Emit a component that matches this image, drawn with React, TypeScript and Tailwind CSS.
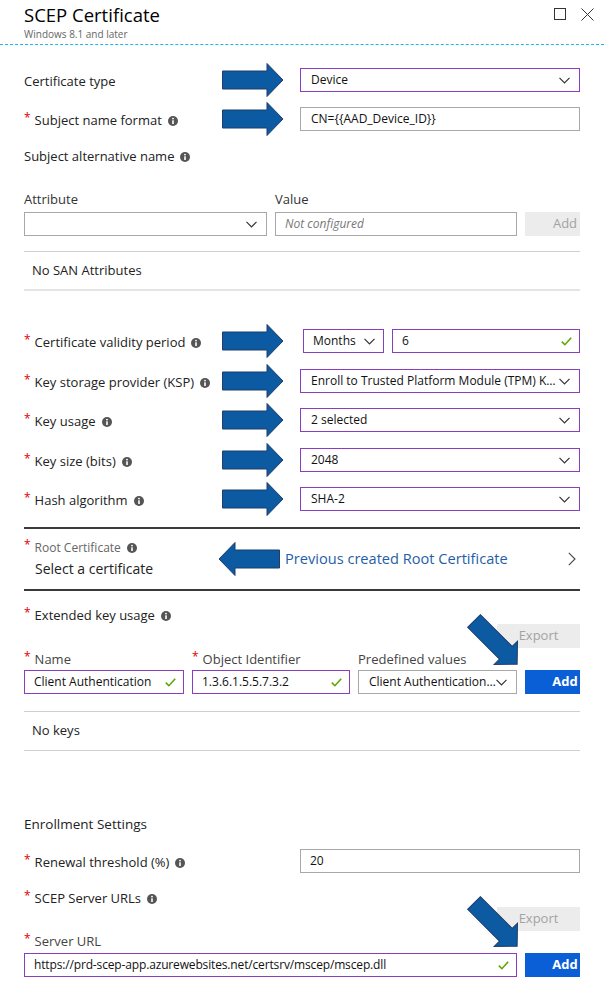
import React from "react";

function Info() {
  return (
    <svg width="10" height="10" viewBox="0 0 10 10" className="inline-block ml-[6px] align-[-1px]">
      <circle cx="5" cy="5" r="5" fill="#555" />
      <rect x="4.2" y="4.3" width="1.6" height="3.7" fill="#fff" />
      <circle cx="5" cy="2.6" r="0.95" fill="#fff" />
    </svg>
  );
}

function Chevron() {
  return (
    <svg width="11" height="7" viewBox="0 0 11 7" className="shrink-0">
      <polyline points="0.5,0.8 5.5,5.8 10.5,0.8" fill="none" stroke="#333" strokeWidth="1.2" />
    </svg>
  );
}

function Check() {
  return (
    <svg width="11" height="9" viewBox="0 0 11 9" className="shrink-0">
      <polyline points="0.8,4.6 3.9,7.7 10.2,0.8" fill="none" stroke="#5ea500" strokeWidth="1.6" />
    </svg>
  );
}

function Req() {
  return <span className="text-[#e00000] text-[12px] relative top-[-3px] mr-[4px]">*</span>;
}

function Label({ req, info, children }: { req?: boolean; info?: boolean; children: React.ReactNode }) {
  return (
    <span className="text-[13px] text-[#222] whitespace-nowrap">
      {req && <Req />}
      {children}
      {info && <Info />}
    </span>
  );
}

function Select({ text, purple = true, className = "" }: { text: string; purple?: boolean; className?: string }) {
  return (
    <div
      className={`h-[24px] border flex items-center justify-between pl-[10px] pr-[9px] bg-white ${
        purple ? "border-[#8a3cc2]" : "border-[#a8a8a8]"
      } ${className}`}
    >
      <span className="text-[12px] text-[#111] truncate">{text}</span>
      <Chevron />
    </div>
  );
}

function Input({
  text,
  purple = false,
  check = false,
  italic = false,
  className = "",
  textClass = "",
}: {
  text: string;
  purple?: boolean;
  check?: boolean;
  italic?: boolean;
  className?: string;
  textClass?: string;
}) {
  return (
    <div
      className={`h-[24px] border flex items-center justify-between pl-[9px] pr-[7px] bg-white ${
        purple ? "border-[#8a3cc2]" : "border-[#a8a8a8]"
      } ${className}`}
    >
      <span className={`text-[12px] truncate ${italic ? "italic text-[#777]" : "text-[#111]"} ${textClass}`}>{text}</span>
      {check && <Check />}
    </div>
  );
}

function RightArrow({ className = "" }: { className?: string }) {
  return (
    <svg width="62" height="34" viewBox="0 0 62 34" className={className}>
      <polygon
        points="0.5,8 45,8 45,0.5 61,17 45,33.5 45,26 0.5,26"
        fill="#0b5aa2"
        stroke="#213d68"
        strokeWidth="1"
      />
    </svg>
  );
}

function LeftArrow({ className = "" }: { className?: string }) {
  return (
    <svg width="62" height="34" viewBox="0 0 62 34" className={className}>
      <polygon
        points="61.5,8 17,8 17,0.5 1,17 17,33.5 17,26 61.5,26"
        fill="#0b5aa2"
        stroke="#213d68"
        strokeWidth="1"
      />
    </svg>
  );
}

function DiagArrow({ className = "" }: { className?: string }) {
  return (
    <svg width="70" height="66" viewBox="0 0 70 66" className={className}>
      <polygon
        transform="translate(22 17) rotate(45)"
        points="0,-9 45,-9 45,-16.5 61,0 45,16.5 45,9 0,9"
        fill="#0b5aa2"
        stroke="#213d68"
        strokeWidth="1"
      />
    </svg>
  );
}

function FieldRow({
  label,
  arrow = true,
  children,
  className = "",
}: {
  label: React.ReactNode;
  arrow?: boolean;
  children: React.ReactNode;
  className?: string;
}) {
  return (
    <div className={`relative flex items-center h-[24px] ${className}`}>
      <div className="w-[276px] shrink-0">{label}</div>
      <div className="w-[280px] shrink-0">{children}</div>
      {arrow && <RightArrow className="absolute left-[198px] top-[-5px]" />}
    </div>
  );
}

function DisabledBtn({ text, className = "" }: { text: string; className?: string }) {
  return (
    <div className={`h-[24px] bg-[#ececec] text-[#a3a3a3] text-[13px] flex items-center justify-center shrink-0 ${className}`}>
      {text}
    </div>
  );
}

function AddBtn() {
  return (
    <div className="h-[24px] w-[80px] shrink-0 bg-[#0b5fd6] text-white text-[13px] font-bold flex items-center justify-center">
      Add
    </div>
  );
}

export default function App() {
  return (
    <div className="relative w-[604px] h-[984px] bg-white overflow-hidden font-['Open_Sans','Noto_Sans',sans-serif] text-[#222]">
      {/* Header */}
      <div className="h-[45px] border-b border-dashed border-[#1fb6ea] flex">
        <div className="pl-[24px] pt-[2px]">
          <div className="text-[18.5px] leading-[25px] text-black">SCEP Certificate</div>
          <div className="text-[10px] leading-[13px] text-[#666] mt-[1px]">Windows 8.1 and later</div>
        </div>
        <div className="ml-auto flex items-start gap-[15px] pr-[10px] pt-[8px]">
          <svg width="12" height="12" viewBox="0 0 12 12">
            <rect x="0.5" y="0.5" width="11" height="11" fill="none" stroke="#333" strokeWidth="1" />
          </svg>
          <svg width="13" height="13" viewBox="0 0 13 13">
            <path d="M0.5 0.5 L12.5 12.5 M12.5 0.5 L0.5 12.5" stroke="#333" strokeWidth="1" />
          </svg>
        </div>
      </div>

      {/* Body */}
      <div className="ml-[24px] w-[556px] overflow-hidden flex flex-col">
        <FieldRow className="mt-[23px]" label={<Label>Certificate type</Label>}>
          <Select text="Device" />
        </FieldRow>
        <FieldRow className="mt-[15px]" label={<Label req info>Subject name format</Label>}>
          <Input text="CN={{AAD_Device_ID}}" textClass="pl-[1px]" />
        </FieldRow>

        <div className="mt-[16px] h-[20px] flex items-center">
          <Label info>Subject alternative name</Label>
        </div>

        <div className="mt-[24px] h-[18px] flex items-center text-[13px] text-[#333]">
          <div className="w-[251px] shrink-0">Attribute</div>
          <div>Value</div>
        </div>
        <div className="mt-[3px] flex gap-[8px]">
          <Select text="" purple={false} className="w-[243px] shrink-0" />
          <Input text="Not configured" italic className="w-[242px] shrink-0" />
          <DisabledBtn text="Add" className="w-[80px]" />
        </div>

        <div className="mt-[15px] border-t border-[#cfcfcf] h-[40px] flex items-center pl-[8px] text-[13px] border-b-2 border-b-[#e4e4e4]">
          No SAN Attributes
        </div>

        <FieldRow className="mt-[38px]" label={<Label req info>Certificate validity period</Label>}>
          <div className="flex gap-[8px]">
            <Select text="Months" className="ml-[3px] w-[81px] shrink-0 !pl-[9px] !pr-[8px]" />
            <Input text="6" purple check className="flex-1" />
          </div>
        </FieldRow>
        <FieldRow className="mt-[16px]" label={<Label req info>Key storage provider (KSP)</Label>}>
          <Select text="Enroll to Trusted Platform Module (TPM) KSP if present, otherwise Software KSP" />
        </FieldRow>
        <FieldRow className="mt-[15px]" label={<Label req info>Key usage</Label>}>
          <Select text="2 selected" />
        </FieldRow>
        <FieldRow className="mt-[16px]" label={<Label req info>Key size (bits)</Label>}>
          <Select text="2048" />
        </FieldRow>
        <FieldRow className="mt-[15px]" label={<Label req info>Hash algorithm</Label>}>
          <Select text="SHA-2" />
        </FieldRow>

        {/* Root certificate */}
        <div className="mt-[16px] border-t-2 border-b-2 border-[#3a3a3a] h-[64px] relative flex items-center">
          <div className="pl-[11px] flex flex-col w-[194px]">
            <div className="text-[12px] text-[#666] whitespace-nowrap leading-[16px] ml-[-11px]">
              <Req />
              Root Certificate
              <Info />
            </div>
            <div className="text-[14px] text-[#222] leading-[20px] mt-[3px]">Select a certificate</div>
          </div>
          <LeftArrow className="shrink-0" />
          <div className="ml-[5px] text-[14.6px] text-[#1f5ea8] whitespace-nowrap">Previous created Root Certificate</div>
          <svg width="8" height="14" viewBox="0 0 8 14" className="ml-auto mr-[4px]">
            <polyline points="0.8,0.8 7,7 0.8,13.2" fill="none" stroke="#444" strokeWidth="1.1" />
          </svg>
        </div>

        {/* Extended key usage */}
        <div className="mt-[16px] h-[17px] flex items-center">
          <Label req info>Extended key usage</Label>
        </div>
        <div className="flex justify-end">
          <DisabledBtn text="Export" className="w-[83px]" />
        </div>
        <div className="mt-[3px] h-[18px] flex items-center text-[13px] text-[#444]">
          <div className="w-[168px] shrink-0"><Req />Name</div>
          <div className="w-[166px] shrink-0"><Req />Object Identifier</div>
          <div>Predefined values</div>
        </div>
        <div className="mt-[1px] flex gap-[8px]">
          <Input text="Client Authentication" purple check className="w-[160px] shrink-0" />
          <Input text="1.3.6.1.5.5.7.3.2" purple check className="w-[158px] shrink-0" />
          <Select text="Client Authentication (1.3.6.1.5.5.7.3.2)" purple={false} className="w-[159px] shrink-0" />
          <AddBtn />
        </div>
        <div className="mt-[17px] border-t border-b border-[#cfcfcf] h-[40px] flex items-center pl-[8px] text-[13px]">
          No keys
        </div>

        {/* Enrollment settings */}
        <div className="mt-[64px] h-[18px] flex items-center text-[13.5px]">Enrollment Settings</div>
        <FieldRow arrow={false} className="mt-[16px]" label={<Label req info>Renewal threshold (%)</Label>}>
          <Input text="20" />
        </FieldRow>
        <div className="mt-[17px] h-[18px] flex items-center">
          <Label req info>SCEP Server URLs</Label>
        </div>
        <div className="mt-[-1px] flex justify-end">
          <DisabledBtn text="Export" className="w-[83px]" />
        </div>
        <div className="mt-[2px] h-[18px] flex items-center text-[13px] text-[#444]">
          <Req />
          Server URL
        </div>
        <div className="mt-[2px] flex gap-[8px]">
          <Input
            text="https://prd-scep-app.azurewebsites.net/certsrv/mscep/mscep.dll"
            purple
            check
            className="w-[493px] shrink-0"
            textClass="tracking-[-0.15px]"
          />
          <AddBtn />
        </div>
      </div>

      {/* annotation arrows */}
      <DiagArrow className="absolute left-[452px] top-[604px]" />
      <DiagArrow className="absolute left-[452px] top-[886px]" />
    </div>
  );
}
